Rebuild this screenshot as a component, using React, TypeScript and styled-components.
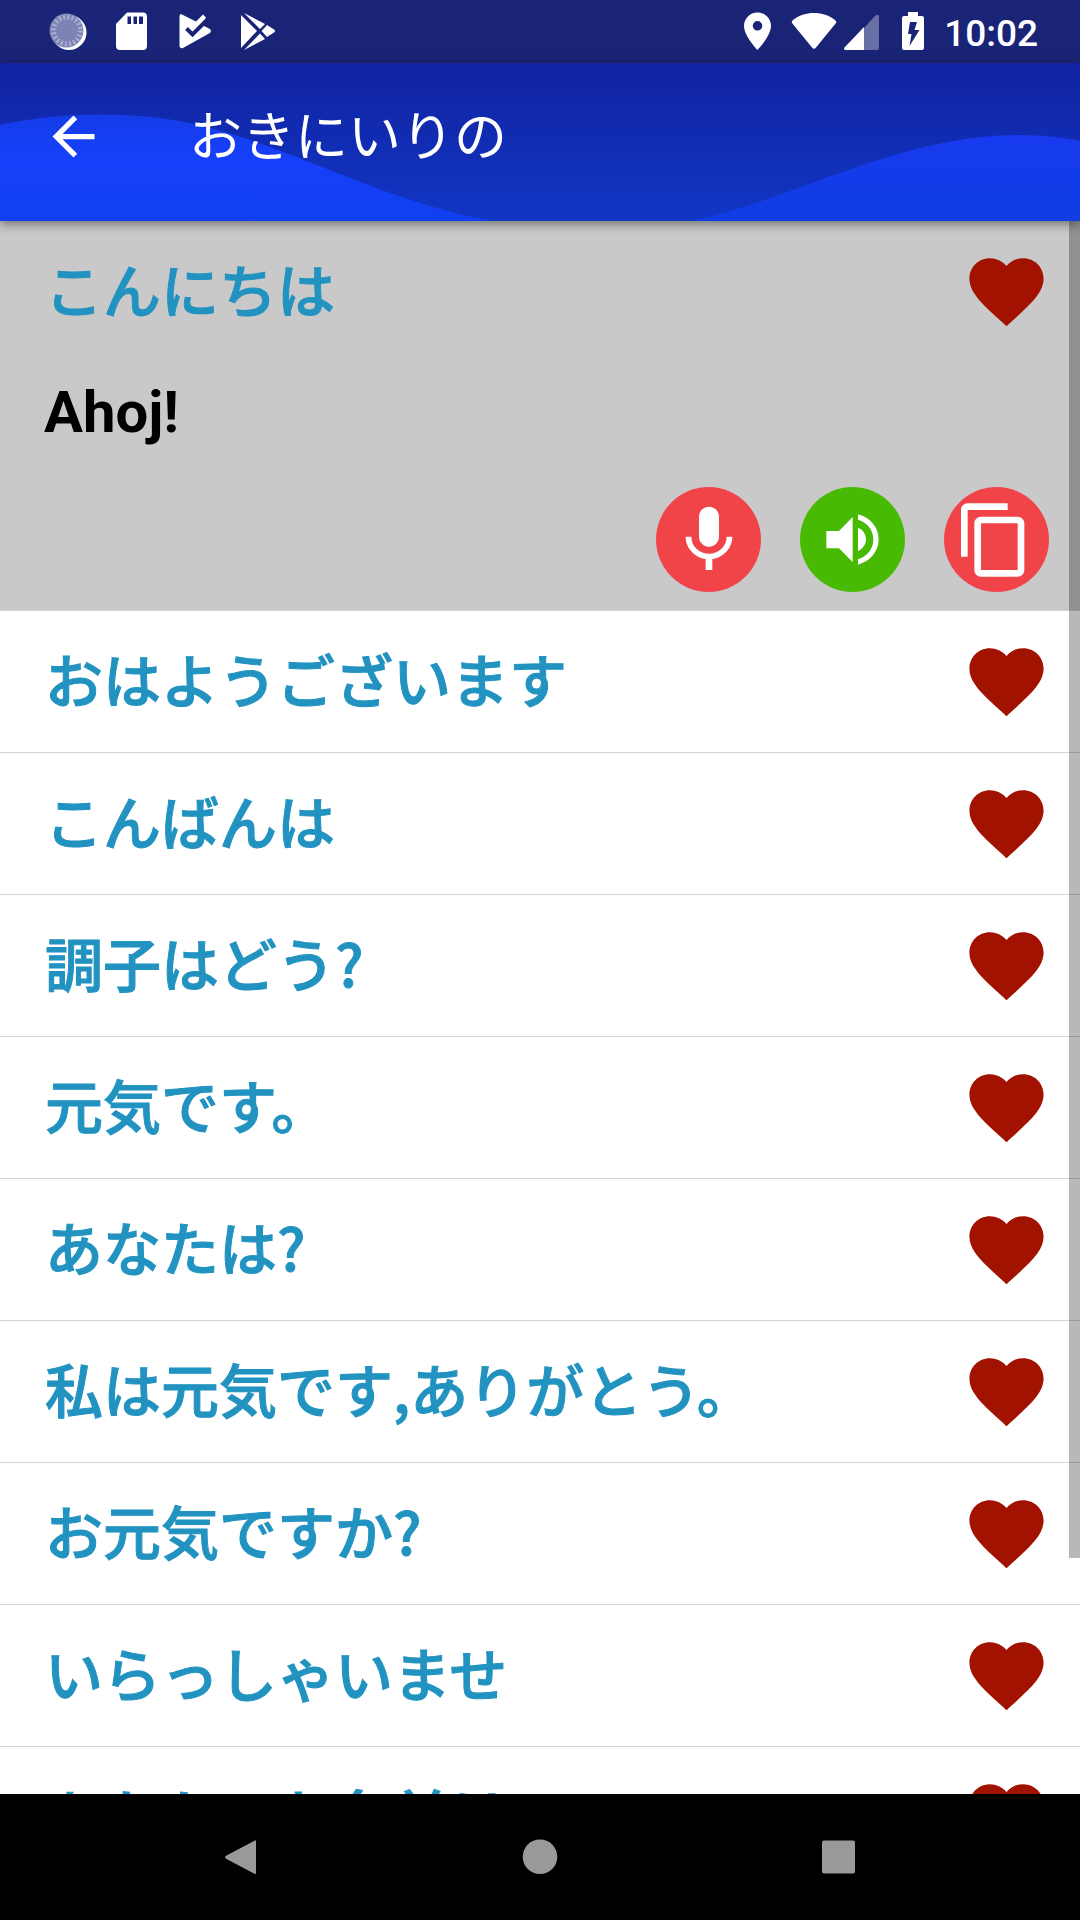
import React, { useState } from 'react';
import styled, { createGlobalStyle } from 'styled-components';

const GlobalStyle = createGlobalStyle`
  *, *::before, *::after { box-sizing: border-box; }
  html, body { margin: 0; padding: 0; background: #000; }
  body { font-family: Roboto, "Noto Sans CJK JP", sans-serif; }
  button { margin: 0; padding: 0; border: 0; background: none; font: inherit; color: inherit; cursor: pointer; }
  svg { display: block; }
`;

const Screen = styled.div`
  display: flex;
  flex-direction: column;
  height: 100vh;
  overflow: hidden;
  background: #fff;
`;

const StatusBar = styled.div`
  display: flex;
  flex: none;
  align-items: center;
  justify-content: space-between;
  height: 63px;
  padding: 0 42px 0 36px;
  background: #1a2476;
  color: #fff;
`;

const StatusGroup = styled.div`
  display: flex;
  align-items: center;
`;

const Clock = styled.time`
  padding-left: 8px;
  padding-top: 3px;
  font-size: 37px;
  font-weight: 500;
  line-height: 63px;
`;

const AppBar = styled.header`
  position: relative;
  z-index: 1;
  flex: none;
  display: flex;
  align-items: center;
  height: 158px;
  padding: 0 42px 11px;
  gap: 84px;
  background: linear-gradient(#1123a1, #1136c4);
  box-shadow: 0 3px 10px rgba(0, 0, 0, 0.45);
  color: #fff;
`;

const Waves = styled.svg`
  position: absolute;
  inset: 0;
  width: 100%;
  height: 100%;
`;

const BackButton = styled.button`
  position: relative;
  flex: none;
`;

const Title = styled.h1`
  position: relative;
  margin: 0;
  padding-top: 2px;
  font-size: 53px;
  font-weight: 400;
  line-height: 80px;
`;

const ListArea = styled.main`
  position: relative;
  flex: 1;
  min-height: 0;
  overflow: hidden;
`;

const PhraseList = styled.ul`
  margin: 0;
  padding: 0;
  list-style: none;
`;

const PhraseItem = styled.li<{ $open?: boolean }>`
  border-bottom: 1px solid #d4d4d4;
  background: ${(p) => (p.$open ? '#c9c9c9' : '#fff')};
`;

const PhraseRow = styled.div`
  display: flex;
  align-items: center;
  justify-content: space-between;
  height: 141px;
  padding: 0 29px 0 45px;
`;

const PhraseButton = styled.button`
  padding-bottom: 8px;
  color: #2293c0;
  font-family: "Noto Sans CJK JP", sans-serif;
  font-size: 58px;
  font-weight: 500;
  -webkit-text-stroke: 1px #2293c0;
  line-height: 84px;
  text-align: left;
  white-space: nowrap;
`;

const Translation = styled.p`
  margin: 0;
  padding: 0 44px;
  color: #000;
  font-size: 58px;
  font-weight: 700;
  line-height: 100px;
`;

const Actions = styled.div`
  display: flex;
  justify-content: flex-end;
  gap: 39px;
  padding: 25px 31px 18px;
`;

const RoundButton = styled.button<{ $color: string }>`
  display: flex;
  align-items: center;
  justify-content: center;
  width: 105px;
  height: 105px;
  border-radius: 50%;
  background: ${(p) => p.$color};
`;

const ScrollThumb = styled.div`
  position: absolute;
  top: 0;
  right: 0;
  width: 11px;
  height: 85%;
  background: rgba(0, 0, 0, 0.28);
`;

const NavBar = styled.nav`
  display: flex;
  flex: none;
  align-items: center;
  justify-content: center;
  gap: 236px;
  height: 126px;
  background: #000;
`;

const Icon = ({ size, d, viewBox = '0 0 24 24', fill = '#fff' }: { size: number; d: string; viewBox?: string; fill?: string }) => (
  <svg width={size} height={size} viewBox={viewBox} fill={fill} aria-hidden="true">
    <path d={d} />
  </svg>
);

const StatusIcon = ({ x, width, children }: { x: number; width: number; children: React.ReactNode }) => (
  <svg width={width} height={63} viewBox={`${x} 0 ${width} 63`} fill="#fff" aria-hidden="true">
    {children}
  </svg>
);

const HEART =
  'M12 21.35l-1.45-1.32C5.4 15.36 2 12.28 2 8.5 2 5.42 4.42 3 7.5 3c1.74 0 3.41.81 4.5 2.09C13.09 3.81 14.76 3 16.5 3 19.58 3 22 5.42 22 8.5c0 3.78-3.4 6.86-8.55 11.54L12 21.35z';
const MIC =
  'M12 14c1.66 0 2.99-1.34 2.99-3L15 5c0-1.66-1.34-3-3-3S9 3.34 9 5v6c0 1.66 1.34 3 3 3zm5.3-3c0 3-2.54 5.1-5.3 5.1S6.7 14 6.7 11H5c0 3.41 2.72 6.23 6 6.72V21h2v-3.28c3.28-.48 6-3.3 6-6.72h-1.7z';
const COPY =
  'M16 1H4c-1.1 0-2 .9-2 2v14h2V3h12V1zm3 4H8c-1.1 0-2 .9-2 2v14c0 1.1.9 2 2 2h11c1.1 0 2-.9 2-2V7c0-1.1-.9-2-2-2zm0 16H8V7h11v14z';
const SPEAKER =
  'M79 132H117L158 90V225L117 184H79zM174 122C188 127 198 142 198 157S188 187 174 192zM174 82C210 91 236 121 236 157S210 224 174 233V217C202 208 220 186 220 157S202 107 174 98z';
const ARROW = 'M20 11H7.83l5.59-5.59L12 4l-8 8 8 8 1.41-1.41L7.83 13H20v-2z';

const phrases = [
  { text: 'こんにちは', translation: 'Ahoj!' },
  { text: 'おはようございます' },
  { text: 'こんばんは' },
  { text: '調子はどう?' },
  { text: '元気です。' },
  { text: 'あなたは?' },
  { text: '私は元気です,ありがとう。' },
  { text: 'お元気ですか?' },
  { text: 'いらっしゃいませ' },
  { text: 'あなたのお名前は' },
];

export default function App() {
  const [open, setOpen] = useState(0);

  return (
    <Screen>
      <GlobalStyle />
      <StatusBar>
        <StatusGroup>
          <StatusIcon x={36} width={63}>
            <circle cx="69" cy="32.5" r="17.5" />
            <circle cx="66.5" cy="30.5" r="17" fill="#7d83b4" />
            <circle cx="67" cy="30.5" r="13.5" fill="none" stroke="#a9adcf" strokeWidth="5" strokeDasharray="2 2.24" />
          </StatusIcon>
          <StatusIcon x={99} width={63}>
            <path
              fillRule="evenodd"
              d="M127 12.500H143Q147 12.500 147 16.500V46Q147 50 143 50H120Q116 50 116 46V24zM127.500 16.500V24H131V16.500zM133.500 16.500V24H137V16.500zM139 16.500V24H143V16.500z"
            />
          </StatusIcon>
          <StatusIcon x={162} width={63}>
            <path d="M182 14.500L196 21.500L203 14.500L206 17.500L202 25L209 28.500Q213 31 209 33.500L183 48Q179.500 49 179.500 45V17Q179.500 13 182 14.500z" />
            <path d="M186.500 28.500L192.500 34.500L207.500 19.500" fill="none" stroke="#1a2476" strokeWidth="4" />
          </StatusIcon>
          <StatusIcon x={225} width={63}>
            <path d="M241 15L257 31L241 48zM244 13L265 24L260 29zM244 50L265 39L260 33.500zM267 25L274 29.500Q276 31 274 32.500L267 37L261.500 31z" />
          </StatusIcon>
        </StatusGroup>
        <StatusGroup>
          <StatusIcon x={726} width={63}>
            <path
              fillRule="evenodd"
              d="M757.500 12.500C750 12.500 744 18.500 744 26C744 36 757.500 50 757.500 50S771 36 771 26C771 18.500 765 12.500 757.500 12.500zM757.500 21A4.800 4.800 0 1 1 757.500 30.600A4.800 4.800 0 1 1 757.500 21z"
            />
          </StatusIcon>
          <StatusIcon x={789} width={51}>
            <path d="M793 20C804 10.500 824 10.500 835 20Q837 21.500 836 23L816 47.500Q814 50 812 47.500L792 23Q791 21.500 793 20z" />
          </StatusIcon>
          <StatusIcon x={840} width={48}>
            <path d="M864 28L875 16Q879 13 879 17V48Q879 50 877 50H864z" fillOpacity="0.35" />
            <path d="M864 27V50H846Q843 50 844.500 47.500z" />
          </StatusIcon>
          <StatusIcon x={888} width={48}>
            <path
              fillRule="evenodd"
              d="M908 12H918V16H922Q924 16 924 18V48Q924 50 922 50H904Q902 50 902 48V18Q902 16 904 16H908zM910 22H917L914.500 30H919.500L909.500 46L911.500 34H908z"
            />
          </StatusIcon>
          <Clock>10:02</Clock>
        </StatusGroup>
      </StatusBar>

      <AppBar>
        <Waves viewBox="0 0 1080 158" preserveAspectRatio="none" aria-hidden="true">
          <defs>
            <linearGradient id="wave" x1="0" y1="0" x2="0" y2="1">
              <stop offset="0" stopColor="#163ce8" />
              <stop offset="0.45" stopColor="#1640fb" />
              <stop offset="1" stopColor="#103fef" />
            </linearGradient>
            <linearGradient id="waveRight" x1="0" y1="0" x2="0" y2="1">
              <stop offset="0" stopColor="#173aee" />
              <stop offset="1" stopColor="#103de4" />
            </linearGradient>
          </defs>
          <path fill="url(#wave)" d="M0 62C60 49 130 48 190 60C285 80 380 138 492 158H0z" />
          <path fill="url(#waveRight)" d="M692 158C800 134 900 72 1019 72Q1053 72 1080 78V158z" />
        </Waves>
        <BackButton aria-label="戻る">
          <Icon size={63} d={ARROW} />
        </BackButton>
        <Title>おきにいりの</Title>
      </AppBar>

      <ListArea>
        <PhraseList>
          {phrases.map((p, i) => {
            const isOpen = open === i && Boolean(p.translation);
            return (
              <PhraseItem key={p.text} $open={isOpen}>
                <PhraseRow>
                  <PhraseButton aria-expanded={isOpen} onClick={() => setOpen(open === i ? -1 : i)}>
                    {p.text}
                  </PhraseButton>
                  <button aria-label="お気に入り">
                    <Icon size={89} d={HEART} fill="#a11200" />
                  </button>
                </PhraseRow>
                {isOpen && (
                  <>
                    <Translation lang="cs">{p.translation}</Translation>
                    <Actions>
                      <RoundButton $color="#f04449" aria-label="録音">
                        <Icon size={80} d={MIC} />
                      </RoundButton>
                      <RoundButton $color="#48ba04" aria-label="再生">
                        <Icon size={105} d={SPEAKER} viewBox="0 0 315 315" />
                      </RoundButton>
                      <RoundButton $color="#f04449" aria-label="コピー">
                        <Icon size={80} d={COPY} viewBox="0.8 0 24 24" />
                      </RoundButton>
                    </Actions>
                  </>
                )}
              </PhraseItem>
            );
          })}
        </PhraseList>
        <ScrollThumb />
      </ListArea>

      <NavBar>
        <button aria-label="戻る">
          <Icon size={63} d="M44 15Q46 13 46 16V46.500Q46 49.500 44 47.500L16.500 33Q13.500 31 16.500 29.500z" viewBox="0 0 63 63" fill="#999" />
        </button>
        <button aria-label="ホーム">
          <Icon size={63} d="M31 13.500A17.300 17.300 0 1 1 31 48.100A17.300 17.300 0 1 1 31 13.500z" viewBox="0 0 63 63" fill="#999" />
        </button>
        <button aria-label="履歴">
          <Icon size={63} d="M16 14.500H45Q47 14.500 47 16.500V45.500Q47 47.500 45 47.500H16Q14 47.500 14 45.500V16.500Q14 14.500 16 14.500z" viewBox="0 0 63 63" fill="#999" />
        </button>
      </NavBar>
    </Screen>
  );
}
